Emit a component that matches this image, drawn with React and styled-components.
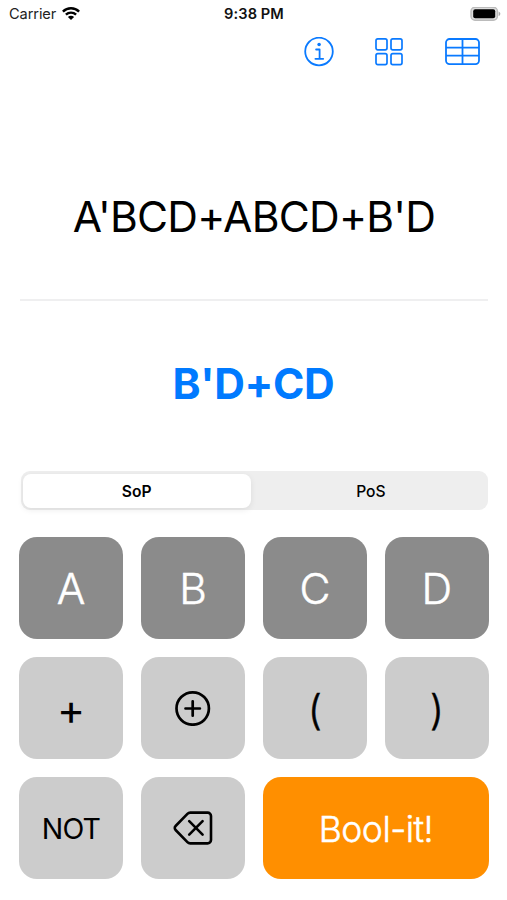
import { useState } from 'react'
import styled, { createGlobalStyle } from 'styled-components'

const GlobalStyle = createGlobalStyle`
  * {
    box-sizing: border-box;
  }
  body {
    margin: 0;
    background: #fff;
    color: #000;
    font-family: Inter, 'Liberation Sans', sans-serif;
    font-feature-settings: 'calt' 0;
  }
  button {
    padding: 0;
    border: 0;
    background: none;
    color: inherit;
    font-family: inherit;
    font-feature-settings: inherit;
  }
  svg {
    display: block;
  }
`

const Screen = styled.div`
  width: 507px;
  height: 900px;
  overflow: hidden;
  display: flex;
  flex-direction: column;
`

const StatusBar = styled.header`
  height: 28px;
  padding: 0 6px 0 9px;
  display: grid;
  grid-template-columns: 1fr auto 1fr;
  align-items: center;
  font-size: 14.6px;
  line-height: 28px;
`

const Carrier = styled.div`
  display: flex;
  align-items: center;
  gap: 6px;
  color: #222;
  letter-spacing: -0.1px;
`

const Time = styled.div`
  margin-right: 2px;
  font-weight: 600;
  color: #111;
  letter-spacing: 0.1px;
`

const Battery = styled.div`
  justify-self: end;
`

const Toolbar = styled.nav`
  height: 48px;
  padding-right: 27px;
  display: flex;
  justify-content: flex-end;
  align-items: center;
  color: #0a7aff;
`

const ToolButton = styled.button`
  margin-left: ${({ $gap }) => $gap || 0}px;
`

const Expression = styled.div`
  height: 225px;
  margin: 0 19px 0 20px;
  padding-top: 115px;
  border-bottom: 2px solid #efeff0;
  text-align: center;
  white-space: nowrap;
  font-size: 42.5px;
  line-height: 52px;
  letter-spacing: -0.75px;
`

const Result = styled.div`
  height: 170px;
  padding-top: 57px;
  text-align: center;
  color: #007aff;
  font-size: 42.5px;
  font-weight: 700;
  line-height: 52px;
  letter-spacing: -0.4px;
`

const Segmented = styled.div`
  height: 39px;
  margin: 0 19px 27px 20.5px;
  padding: 2.5px;
  display: grid;
  grid-template-columns: 1fr 1fr;
  gap: 6px;
  border-radius: 9px;
  background: #eee;
`

const Segment = styled.button`
  padding: 1px 1px 0 0;
  border-radius: 8px;
  font-size: 15.6px;
  font-weight: ${({ $active }) => ($active ? 600 : 500)};
  background: ${({ $active }) => ($active ? '#fff' : 'transparent')};
  box-shadow: ${({ $active }) => ($active ? '0 2px 6px rgba(0, 0, 0, 0.08)' : 'none')};
`

const Keypad = styled.div`
  padding: 0 18.3px 0 19.2px;
  display: grid;
  grid-template-columns: repeat(4, 1fr);
  grid-auto-rows: 101.7px;
  gap: 18.4px;
`

const tones = {
  letter: { background: '#8b8b8b', color: '#fff' },
  operator: { background: '#ccc', color: '#000' },
  action: { background: '#ff8f00', color: '#fff' },
}

const Key = styled.button`
  grid-column: span ${({ $span }) => $span || 1};
  padding-top: ${({ $drop }) => $drop || 0}px;
  display: flex;
  align-items: center;
  justify-content: center;
  border-radius: 18px;
  background: ${({ $tone }) => tones[$tone].background};
  color: ${({ $tone }) => tones[$tone].color};
  font-size: ${({ $size }) => $size || 42.5}px;
  font-weight: ${({ $light }) => ($light ? 300 : 400)};
  -webkit-text-stroke: ${({ $light }) => ($light ? 0.5 : 0)}px currentColor;
  letter-spacing: ${({ $tracking }) => $tracking || 0}px;
`

const WifiIcon = () => (
  <svg width="18" height="14" viewBox="0 0 18 14" fill="none" stroke="#000" strokeWidth="2.4">
    <path d="M0.9 4.6a11.5 11.5 0 0 1 16.2 0" />
    <path d="M3.9 7.7a7.3 7.3 0 0 1 10.2 0" />
    <path d="M9 13.1L5.9 10a4.4 4.4 0 0 1 6.2 0z" fill="#000" stroke="none" />
  </svg>
)

const BatteryIcon = () => (
  <svg width="31" height="15" viewBox="0 0 31 15">
    <rect x="1" y="0.2" width="26.4" height="13" rx="4" fill="#ddd" stroke="#bbb" strokeWidth="1.4" />
    <rect x="3.2" y="2.2" width="22" height="9" rx="2" fill="#000" />
    <path d="M28.6 4.5v4.6c1-.4 1.7-1.3 1.7-2.3s-.7-1.9-1.7-2.3z" fill="#aaa" />
  </svg>
)

const InfoIcon = () => (
  <svg width="30" height="30" viewBox="0 0 30 30" fill="none" stroke="currentColor" strokeWidth="1.8">
    <circle cx="15" cy="14.5" r="13.8" />
    <circle cx="15.1" cy="7.5" r="1.8" fill="currentColor" stroke="none" />
    <path d="M12.1 12.5h3.5v9.2M11.4 21.8h7.8" strokeLinecap="round" strokeLinejoin="round" />
  </svg>
)

const GridIcon = () => (
  <svg width="28" height="28" viewBox="0 0 28 28" fill="none" stroke="currentColor" strokeWidth="1.7">
    <rect x="1" y="0.9" width="11" height="11" rx="1.8" />
    <rect x="16" y="0.9" width="11" height="11" rx="1.8" />
    <rect x="1" y="15.6" width="11" height="11" rx="1.8" />
    <rect x="16" y="15.6" width="11" height="11" rx="1.8" />
  </svg>
)

const TableIcon = () => (
  <svg width="35" height="28" viewBox="0 0 35 28" fill="none" stroke="currentColor" strokeWidth="1.8">
    <rect x="1" y="1" width="33" height="25.2" rx="3.6" />
    <path d="M1 9.6h33M1 17.7h33M17.5 1v25.2" />
  </svg>
)

const XorIcon = () => (
  <svg width="36" height="36" viewBox="0 0 36 36" fill="none" stroke="currentColor" strokeWidth="2.7">
    <circle cx="17.7" cy="18.5" r="16.2" />
    <path d="M17.7 11.3v14.4M10.5 18.5h14.4" strokeLinecap="round" />
  </svg>
)

const DeleteIcon = () => (
  <svg
    width="40"
    height="34"
    viewBox="0 0 40 34"
    fill="none"
    stroke="currentColor"
    strokeWidth="2.6"
    strokeLinecap="round"
    strokeLinejoin="round"
  >
    <path d="M17.2 1.6h17.4a3.4 3.4 0 0 1 3.4 3.4v24a3.4 3.4 0 0 1-3.4 3.4H17.2a4 4 0 0 1-2.8-1.2L2.6 19a2.8 2.8 0 0 1 0-4L14.4 2.8a4 4 0 0 1 2.8-1.2z" />
    <path d="M16.2 10.2l13.4 13.4M29.6 10.2l-13.4 13.4" />
  </svg>
)

const forms = ['SoP', 'PoS']

export default function App() {
  const [form, setForm] = useState('SoP')
  return (
    <Screen>
      <GlobalStyle />
      <StatusBar>
        <Carrier>
          Carrier
          <WifiIcon />
        </Carrier>
        <Time>9:38 PM</Time>
        <Battery>
          <BatteryIcon />
        </Battery>
      </StatusBar>
      <Toolbar>
        <ToolButton aria-label="Info"><InfoIcon /></ToolButton>
        <ToolButton $gap={41} aria-label="Map"><GridIcon /></ToolButton>
        <ToolButton $gap={42} aria-label="Table"><TableIcon /></ToolButton>
      </Toolbar>
      <Expression>A'BCD+ABCD+B'D</Expression>
      <Result>B'D+CD</Result>
      <Segmented>
        {forms.map(item => (
          <Segment key={item} $active={form === item} onClick={() => setForm(item)}>
            {item}
          </Segment>
        ))}
      </Segmented>
      <Keypad>
        {['A', 'B', 'C', 'D'].map(letter => (
          <Key key={letter} $tone="letter" $light $drop={2}>{letter}</Key>
        ))}
        <Key $tone="operator" $drop={4}>+</Key>
        <Key $tone="operator" aria-label="Xor"><XorIcon /></Key>
        <Key $tone="operator" $size={41} $light $drop={5}>(</Key>
        <Key $tone="operator" $size={41} $light $drop={5}>)</Key>
        <Key $tone="operator" $size={28.5} $tracking={-0.8} $drop={1}>NOT</Key>
        <Key $tone="operator" aria-label="Delete"><DeleteIcon /></Key>
        <Key $tone="action" $span={2} $size={35.5} $light $tracking={-0.5} $drop={2}>Bool-it!</Key>
      </Keypad>
    </Screen>
  )
}
